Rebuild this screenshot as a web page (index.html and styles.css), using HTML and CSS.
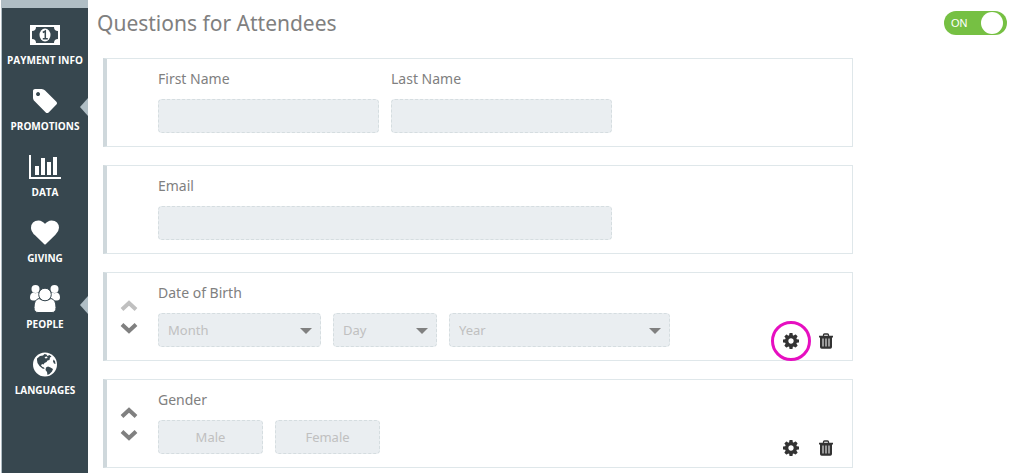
FILE: index.html
```html
<!DOCTYPE html>
<html lang="en">
<head>
    <meta charset="UTF-8">
    <meta name="viewport" content="width=device-width, initial-scale=1.0">
    <title>Questions for Attendees</title>
    <link rel="stylesheet" href="styles.css">
</head>
<body>

<!-- Shared icons -->
<svg class="sprite" aria-hidden="true">
    <symbol id="icon-up" viewBox="0 0 18 12">
        <path d="M2 9.500 9 3l7 6.500" fill="none" stroke="currentColor" stroke-width="4"/>
    </symbol>
    <symbol id="icon-down" viewBox="0 0 18 12">
        <path d="M2 2.500 9 9l7-6.500" fill="none" stroke="currentColor" stroke-width="4"/>
    </symbol>
    <symbol id="icon-gear" viewBox="128 128 1536 1536">
        <path fill="currentColor" d="M1152 896q0-106-75-181t-181-75-181 75-75 181 75 181 181 75 181-75 75-181zm512-109v222q0 12-8 23t-20 13l-185 28q-19 54-39 91 35 50 107 138 10 12 10 25t-9 23q-27 37-99 108t-94 71q-12 0-26-9l-138-108q-44 23-91 38-16 136-29 186-7 28-36 28h-222q-14 0-24.500-8.500t-11.500-21.500l-28-184q-49-16-90-37l-141 107q-10 9-25 9-14 0-25-11-126-114-165-168-7-10-7-23 0-12 8-23 15-21 51-66.500t54-70.500q-27-50-41-99l-183-27q-13-2-21-12.500t-8-23.500v-222q0-12 8-23t19-13l186-28q14-46 39-92-40-57-107-138-10-12-10-24 0-10 9-23 26-36 98.500-107.500t94.500-71.500q13 0 26 10l138 107q44-23 91-38 16-136 29-186 7-28 36-28h222q14 0 24.500 8.500t11.500 21.500l28 184q49 16 90 37l142-107q9-9 24-9 13 0 25 10 129 119 165 170 7 8 7 22 0 12-8 23-15 21-51 66.500t-54 70.500q26 50 41 98l183 28q13 2 21 12.500t8 23.500z"/>
    </symbol>
    <symbol id="icon-trash" viewBox="0 0 14 16">
        <path d="M4.500 3V2q0-1 1-1h3q1 0 1 1v1" fill="none" stroke="currentColor" stroke-width="1.300"/>
        <path fill="currentColor" fill-rule="evenodd" d="M0 2.700h14v1.900h-1V14q0 1.800-1.700 1.800H2.700Q1 15.800 1 14V4.600H0zM3.500 5.500v8h1v-8zm3 0v8h1v-8zm3 0v8h1v-8z"/>
    </symbol>
</svg>

<div class="layout">
    <nav class="sidebar">
        <a class="menu-item" href="#">
            <svg class="menu-icon" viewBox="0 0 32 30">
                <path fill="#fff" fill-rule="evenodd" d="M1 5h30v20H1zM7 7q0 4-4 4v8q4 0 4 4h18q0-4 4-4v-8q-4 0-4-4z"/>
                <ellipse cx="16" cy="15" rx="5.500" ry="6.500" fill="#fff"/>
                <path d="M13.800 12.500 16.300 11v7.500M13.800 18.700h5" fill="none" stroke="#37474f" stroke-width="1.500"/>
            </svg>
            <span>Payment Info</span>
        </a>
        <a class="menu-item has-arrow" href="#">
            <svg class="menu-icon" viewBox="-124 -61 2020 1894">
                <path fill="#fff" d="M576 448q0-53-37.500-90.500t-90.500-37.500-90.500 37.500-37.500 90.500 37.500 90.500 90.500 37.500 90.500-37.500 37.500-90.500zm1067 576q0 53-37 90l-491 492q-39 37-91 37-53 0-90-37l-715-716q-38-37-64.500-101t-26.500-117v-416q0-52 38-90t90-38h416q53 0 117 26.500t102 64.500l715 714q37 39 37 91z"/>
            </svg>
            <span>Promotions</span>
        </a>
        <a class="menu-item" href="#">
            <svg class="menu-icon" viewBox="0 0 32 30">
                <path fill="#fff" d="M0 3h2v22h30v2H0zM6 14h4v9H6zM12 6h4v17h-4zM18 10h4v13h-4zM24 5h4v18h-4z"/>
            </svg>
            <span>Data</span>
        </a>
        <a class="menu-item" href="#">
            <svg class="menu-icon" viewBox="-128 -32 2048 1920">
                <path fill="#fff" d="M896 1664q-26 0-44-18l-624-602q-10-8-27.500-26t-55.500-65.500-68-97.500-53.500-121-23.500-138q0-220 127-344t351-124q62 0 126.500 21.500t120 58 95.500 68.500 76 68q36-36 76-68t95.500-68.500 120-58 126.500-21.500q224 0 351 124t127 344q0 221-229 450l-623 600q-18 18-44 18z"/>
            </svg>
            <span>Giving</span>
        </a>
        <a class="menu-item has-arrow" href="#">
            <svg class="menu-icon" viewBox="0 0 32 30">
                <g fill="#fff">
                    <circle cx="6.500" cy="5" r="4"/>
                    <circle cx="25.500" cy="5" r="4"/>
                    <path d="M4 8.500q2.500 1.500 5 0l3 1v7H4q-3 0-3-3 0-4 3-5zM28 8.500q-2.500 1.500-5 0l-3 1v7h8q3 0 3-3 0-4-3-5z"/>
                </g>
                <g fill="#fff" stroke="#37474f">
                    <path d="M10 14.500q6 4 12 0 5 1 5 9 0 5-4 5H9q-4 0-4-5 0-8 5-9z"/>
                    <circle cx="16" cy="10.500" r="6.300"/>
                </g>
            </svg>
            <span>People</span>
        </a>
        <a class="menu-item" href="#">
            <svg class="menu-icon" viewBox="0 0 32 30">
                <circle cx="16" cy="14.500" r="12" fill="#fff"/>
                <g fill="#37474f">
                    <path d="m8 8.500 3-2.500 3-.5 1.500-1.500 2 .5 1 1.500 2-1 2 1.500-1.500 1-.5 2.500-2 .5-1 1.500-2 1-1 1.500-1.500-.5-1 1.500 1.500 1.500 1.500.5.500 1.500-2-.5-3-2.500-2-3-.5-3z"/>
                    <path d="m17 17.500 2-1 2.500 1 2.500 1.500-1 2.500-2.500 2.500-2 1-.5-3-1.500-2zM24.500 9.500l1.500 1.500.5 3-1.500-.5-1-2z"/>
                </g>
                <path d="M15.500 7 18 6.500l.5 1.500-2 .5z" fill="#fff"/>
            </svg>
            <span>Languages</span>
        </a>
    </nav>

    <main class="content">
        <header class="page-header">
            <h1>Questions for Attendees</h1>
            <label class="switch">
                <input type="checkbox" role="switch" aria-label="Questions for Attendees" checked>
                <span class="switch-text">ON</span>
            </label>
        </header>

        <form class="questions">
            <section class="card">
                <div class="fields two-columns">
                    <div>
                        <label class="title" for="firstName">First Name</label>
                        <input class="field" type="text" id="firstName">
                    </div>
                    <div>
                        <label class="title" for="lastName">Last Name</label>
                        <input class="field" type="text" id="lastName">
                    </div>
                </div>
            </section>

            <section class="card">
                <div class="fields">
                    <div>
                        <label class="title" for="email">Email</label>
                        <input class="field" type="email" id="email">
                    </div>
                </div>
            </section>

            <section class="card">
                <div class="mover">
                    <button type="button" aria-label="Move up" disabled><svg><use href="#icon-up"/></svg></button>
                    <button type="button" aria-label="Move down"><svg><use href="#icon-down"/></svg></button>
                </div>
                <div class="question" role="group" aria-labelledby="birthTitle">
                    <div class="title" id="birthTitle">Date of Birth</div>
                    <div class="row">
                        <div class="select month">
                            <select class="field" aria-label="Month"><option>Month</option></select>
                        </div>
                        <div class="select day">
                            <select class="field" aria-label="Day"><option>Day</option></select>
                        </div>
                        <div class="select year">
                            <select class="field" aria-label="Year"><option>Year</option></select>
                        </div>
                    </div>
                </div>
                <div class="actions">
                    <button class="highlight" type="button" aria-label="Settings"><svg><use href="#icon-gear"/></svg></button>
                    <button type="button" aria-label="Delete"><svg class="trash"><use href="#icon-trash"/></svg></button>
                </div>
            </section>

            <section class="card">
                <div class="mover">
                    <button type="button" aria-label="Move up"><svg><use href="#icon-up"/></svg></button>
                    <button type="button" aria-label="Move down"><svg><use href="#icon-down"/></svg></button>
                </div>
                <div class="question" role="group" aria-labelledby="genderTitle">
                    <div class="title" id="genderTitle">Gender</div>
                    <div class="row">
                        <button class="field choice" type="button">Male</button>
                        <button class="field choice" type="button">Female</button>
                    </div>
                </div>
                <div class="actions">
                    <button type="button" aria-label="Settings"><svg><use href="#icon-gear"/></svg></button>
                    <button type="button" aria-label="Delete"><svg class="trash"><use href="#icon-trash"/></svg></button>
                </div>
            </section>
        </form>
    </main>
</div>

</body>
</html>
```

FILE: styles.css
```css
* {
    box-sizing: border-box;
}
body {
    margin: 0;
    background-color: #fff;
    color: #808080;
    font-family: "Noto Sans", "Open Sans", sans-serif;
    font-size: 14px;
}
button {
    padding: 0;
    border: none;
    background: none;
    color: inherit;
    font-family: inherit;
    cursor: pointer;
}
svg {
    display: block;
}
.sprite {
    display: none;
}
.layout {
    display: flex;
    min-height: 100vh;
    padding-left: 1px;
}

/* Sidebar */
.sidebar {
    flex: 0 0 87px;
    border-top: 8px solid #b0bec5;
    border-left: 1px solid #b0bec5;
    background-color: #37474f;
}
.menu-item {
    display: flex;
    flex-direction: column;
    align-items: center;
    gap: 2px;
    height: 66px;
    padding-top: 12px;
    position: relative;
    color: #fff;
    font-family: "Open Sans", "Noto Sans", sans-serif;
    font-size: 10px;
    font-weight: bold;
    line-height: 16px;
    text-decoration: none;
    text-transform: uppercase;
    white-space: nowrap;
}
.menu-icon {
    width: 32px;
    height: 30px;
}
.has-arrow::after {
    content: "";
    position: absolute;
    top: 24px;
    right: 0;
    border: 9px solid transparent;
    border-right: 8px solid #b0bec5;
    border-left: none;
}

/* Header */
.content {
    flex: 1;
    min-width: 0;
}
.page-header {
    display: flex;
    align-items: center;
    justify-content: space-between;
    height: 46px;
    padding: 0 17px 0 9px;
}
h1 {
    margin: 0;
    font-size: 21px;
    font-weight: normal;
}
.switch {
    display: flex;
    align-items: center;
    width: 63px;
    height: 24px;
    padding-left: 7px;
    position: relative;
    border-radius: 12px;
    background-color: #76c043;
    color: #fff;
    font-family: "Liberation Sans", Arial, sans-serif;
    font-size: 11px;
    cursor: pointer;
}
.switch input {
    appearance: none;
    position: absolute;
    top: 1px;
    right: 4px;
    width: 22px;
    height: 22px;
    margin: 0;
    border-radius: 50%;
    background-color: #fff;
}

/* Question cards */
.questions {
    display: flex;
    flex-direction: column;
    gap: 18px;
    max-width: 765px;
    padding: 12px 0 4px 15px;
}
.card {
    display: flex;
    min-height: 89px;
    padding: 10px 19px 11px 51px;
    position: relative;
    border: 1px solid #dfe7ea;
    border-left: 4px solid #cfd8dc;
}
.title {
    display: block;
    margin-bottom: 10px;
    line-height: 20px;
}
.fields {
    flex: 0 1 454px;
}
.two-columns {
    display: grid;
    grid-template-columns: 1fr 1fr;
    gap: 12px;
}
.row {
    display: flex;
    gap: 12px;
}
.field {
    display: block;
    width: 100%;
    height: 34px;
    padding: 0 9px;
    border: 1px dashed #d5dde0;
    border-radius: 4px;
    background-color: #eaeef1;
    color: #c0c0c0;
    font-family: inherit;
    font-size: 13px;
}
.select {
    position: relative;
}
.select select {
    appearance: none;
}
.select::after {
    content: "";
    position: absolute;
    top: 15px;
    right: 9px;
    border: 6px solid transparent;
    border-top-color: #808080;
    border-bottom: none;
    pointer-events: none;
}
.month {
    width: 163px;
}
.day {
    width: 104px;
}
.year {
    width: 221px;
}
.choice {
    width: 105px;
}
.mover {
    display: flex;
    flex-direction: column;
    justify-content: center;
    gap: 10px;
    position: absolute;
    top: 0;
    bottom: 0;
    left: 13px;
}
.mover svg {
    width: 18px;
    height: 12px;
}
.mover button:disabled {
    color: #c0c0c0;
}
.actions {
    display: flex;
    align-items: flex-end;
    gap: 20px;
    margin-left: auto;
    color: #333;
}
.actions button {
    position: relative;
}
.actions svg {
    width: 16px;
    height: 16px;
}
.actions .trash {
    width: 14px;
}
.highlight::after {
    content: "";
    position: absolute;
    inset: -12px;
    border: 3px solid #e60fc0;
    border-radius: 50%;
}
```
